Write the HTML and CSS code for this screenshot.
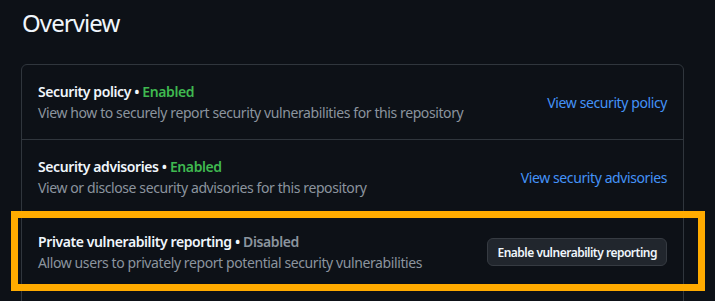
FILE: index.html
```html
<html lang="en">

<head>
  <meta charset="UTF-8">
  <meta name="viewport" content="width=device-width, initial-scale=1.0">
  <title>Overview</title>
  <link rel="stylesheet" href="styles.css">
</head>

<body>
  <div class="main">
    <h2 class="subhead">Overview</h2>
    <div class="box">
      <div class="box-row">
        <div class="row-text">
          <div class="row-title">Security policy <span class="dot">&bull;</span> <span class="state-on">Enabled</span></div>
          <div class="row-desc">View how to securely report security vulnerabilities for this repository</div>
        </div>
        <a class="row-link" href="#">View security policy</a>
      </div>
      <div class="box-row">
        <div class="row-text">
          <div class="row-title">Security advisories <span class="dot">&bull;</span> <span class="state-on">Enabled</span></div>
          <div class="row-desc">View or disclose security advisories for this repository</div>
        </div>
        <a class="row-link" href="#">View security advisories</a>
      </div>
      <div class="box-row highlighted">
        <div class="row-text">
          <div class="row-title">Private vulnerability reporting <span class="dot">&bull;</span> <span class="state-off">Disabled</span></div>
          <div class="row-desc">Allow users to privately report potential security vulnerabilities</div>
        </div>
        <button class="btn">Enable vulnerability reporting</button>
        <div class="highlight"></div>
      </div>
    </div>
  </div>
</body>

</html>
```

FILE: styles.css
```css
html, body {
  margin: 0;
  background: #0d1117;
  color: #e6edf3;
  font-family: "Noto Sans", "Liberation Sans", sans-serif;
  font-size: 14px;
  line-height: 1.5;
  letter-spacing: -0.4px;
  overflow: hidden;
}

.main {
  padding: 0 31px 0 21px;
}

.subhead {
  margin: 0;
  padding: 5px 0 0 1px;
  height: 59px;
  font-size: 24px;
  font-weight: 400;
  line-height: 36px;
  letter-spacing: -0.9px;
  color: #f0f6fc;
}

.box {
  border: 1px solid #30363d;
  border-radius: 6px;
  height: 260px;
}

.box-row {
  position: relative;
  display: flex;
  align-items: center;
  justify-content: space-between;
  padding: 16px;
  border-top: 1px solid #30363d;
}

.box-row:first-child {
  border-top: 0;
}

.row-title {
  font-weight: 600;
  color: #f0f6fc;
}

.dot {
  color: #f0f6fc;
}

.state-on {
  color: #3fb950;
}

.state-off {
  color: #8b949e;
}

.row-desc {
  color: #8b949e;
}

.row-link {
  color: #4493f8;
  text-decoration: none;
}

.btn {
  height: 28px;
  padding: 0 9px;
  font-family: inherit;
  font-size: 12px;
  font-weight: 600;
  letter-spacing: -0.5px;
  color: #f0f6fc;
  background: #21262d;
  border: 1px solid #363b42;
  border-radius: 6px;
}

.highlight {
  position: absolute;
  left: -11px;
  right: -22px;
  top: -4px;
  bottom: -2px;
  border: 7px solid #ffab00;
  pointer-events: none;
}
```
